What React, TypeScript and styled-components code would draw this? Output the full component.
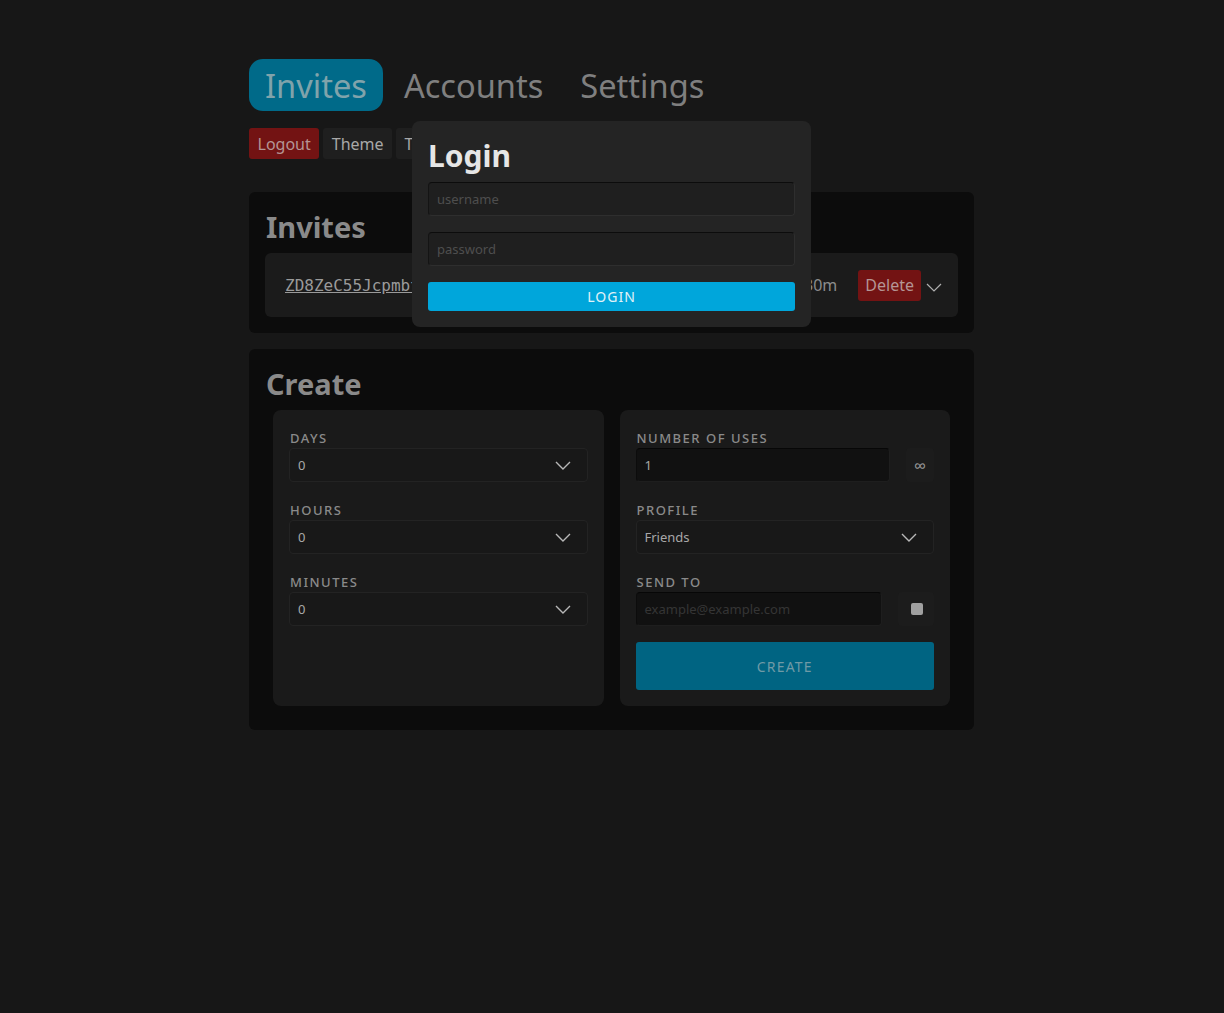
import React from "react";
import styled, { createGlobalStyle } from "styled-components";

const Global = createGlobalStyle`
  html, body { margin: 0; padding: 0; background: #171717; }
  body { font-family: "Noto Sans", "Open Sans", sans-serif; color: #8a8a8a; }
  * { box-sizing: border-box; }
`;

const Page = styled.div`
  width: 725px;
  margin-left: calc(50% - 363px);
  padding-top: 59px;
  display: flex;
  flex-direction: column;
`;

const TabBar = styled.div`
  display: flex;
  gap: 5px;
`;

const Tab = styled.div<{ $active?: boolean }>`
  height: 52px;
  padding: 0 16px;
  display: flex;
  align-items: center;
  font-size: 32.6px;
  border-radius: 14px;
  background: ${(p) => (p.$active ? "#006a89" : "transparent")};
  color: ${(p) => (p.$active ? "#80a3ab" : "#7f7f7f")};
`;

const ButtonRow = styled.div`
  display: flex;
  gap: 4px;
  margin-top: 17px;
`;

const SmallButton = styled.div<{ $danger?: boolean }>`
  height: 31px;
  padding: 0 8.5px;
  display: flex;
  align-items: center;
  font-size: 16px;
  border-radius: 3px;
  background: ${(p) => (p.$danger ? "#731313" : "#1f1f1f")};
  color: ${(p) => (p.$danger ? "#b59595" : "#a8a8a8")};
`;

const Card = styled.section<{ $gap: number }>`
  background: #0c0c0c;
  border-radius: 6px;
  padding: 0 16px 16px;
  margin-top: ${(p) => p.$gap}px;
`;

const CardTitle = styled.h2`
  margin: 0;
  height: 61px;
  display: flex;
  align-items: center;
  padding-top: 8px;
  padding-left: 1px;
  font-size: 29px;
  font-weight: 700;
  color: #8a8a8a;
`;

const InviteRow = styled.div`
  height: 64px;
  background: #1b1b1b;
  border-radius: 6px;
  display: flex;
  align-items: center;
  padding: 0 16px 0 20px;
`;

const Code = styled.span`
  font-family: "DejaVu Sans Mono", "Liberation Mono", monospace;
  font-size: 16px;
  text-decoration: underline;
  color: #9a9a9a;
  flex: 1;
`;

const Expiry = styled.span`
  font-size: 16px;
  color: #8c8c8c;
  margin-right: 21px;
`;

const DeleteButton = styled.div`
  height: 31px;
  padding: 0 7px;
  display: flex;
  align-items: center;
  border-radius: 3px;
  background: #731313;
  color: #b59595;
  font-size: 16px;
`;

const RowChevron = styled.svg`
  margin-left: 5px;
  margin-top: 4px;
`;

const CreateGrid = styled.div`
  display: grid;
  grid-template-columns: 1fr 1fr;
  gap: 16px;
  padding: 0 8px 8px;
`;

const SubCard = styled.div`
  background: #1a1a1a;
  border-radius: 8px;
  padding: 19px 16px 16px;
  height: 296px;
  display: flex;
  flex-direction: column;
  gap: 19px;
`;

const Field = styled.div`
  display: flex;
  flex-direction: column;
  gap: 1px;
`;

const Label = styled.label`
  font-size: 13px;
  line-height: 18px;
  font-weight: 500;
  letter-spacing: 1.5px;
  text-transform: uppercase;
  color: #8a8a8a;
  padding-left: 1px;
`;

const Select = styled.div`
  height: 34px;
  border: 1px solid #232323;
  border-radius: 4px;
  background: #181818;
  display: flex;
  align-items: center;
  justify-content: space-between;
  padding: 0 16px 0 8px;
  font-size: 13px;
  color: #a8a8a8;
`;

const InputRow = styled.div`
  display: flex;
  gap: 16px;
`;

const TextInput = styled.div<{ $placeholder?: boolean }>`
  flex: 1;
  height: 34px;
  border: 1px solid #1e1e1e;
  border-top-color: #070707;
  border-left-color: #0c0c0c;
  border-radius: 4px;
  background: #111111;
  display: flex;
  align-items: center;
  padding: 0 8px;
  font-size: 13px;
  color: ${(p) => (p.$placeholder ? "#353535" : "#a8a8a8")};
`;

const SideBox = styled.div<{ $w: number }>`
  width: ${(p) => p.$w}px;
  height: 34px;
  border-radius: 4px;
  background: #1c1c1c;
  display: flex;
  align-items: center;
  justify-content: center;
  font-size: 17px;
  color: #9a9a9a;
`;

const Check = styled.div`
  width: 12px;
  height: 12px;
  border-radius: 2px;
  background: #a0a0a0;
  margin-left: 1px;
`;

const CreateButton = styled.div`
  height: 48px;
  margin-top: -3px;
  border-radius: 3px;
  background: #006482;
  color: #6f9aa6;
  display: flex;
  align-items: center;
  justify-content: center;
  font-size: 14px;
  letter-spacing: 1.2px;
`;

const Modal = styled.div`
  position: absolute;
  top: 121px;
  left: calc(50% - 200px);
  width: 399px;
  background: #242424;
  border-radius: 8px;
  padding: 16px;
  display: flex;
  flex-direction: column;
  gap: 16px;
`;

const ModalTitle = styled.h1`
  margin: 0;
  height: 29px;
  font-size: 30px;
  line-height: 37px;
  font-weight: 700;
  color: #e6e6e6;
`;

const ModalInput = styled.div`
  height: 34px;
  border-radius: 4px;
  border: 1px solid #2e2e2e;
  border-top-color: #0c0c0c;
  border-left-color: #141414;
  background: #1f1f1f;
  display: flex;
  align-items: center;
  padding: 0 8px;
  font-size: 13px;
  color: #4e4e4e;
`;

const LoginButton = styled.div`
  height: 29px;
  border-radius: 3px;
  background: #00a6db;
  color: #e0f2f8;
  display: flex;
  align-items: center;
  justify-content: center;
  font-size: 14px;
  letter-spacing: 1px;
`;

const Chevron = ({ color = "#b8b8b8" }: { color?: string }) => (
  <svg width="16" height="9" viewBox="0 0 16 9" fill="none">
    <polyline points="1,1 8,8 15,1" stroke={color} strokeWidth="1.4" />
  </svg>
);

export default function App() {
  return (
    <>
      <Global />
      <Page>
        <TabBar>
          <Tab $active>Invites</Tab>
          <Tab>Accounts</Tab>
          <Tab>Settings</Tab>
        </TabBar>
        <ButtonRow>
          <SmallButton $danger>Logout</SmallButton>
          <SmallButton>Theme</SmallButton>
          <SmallButton>Toggle</SmallButton>
        </ButtonRow>
        <Card $gap={33}>
          <CardTitle>Invites</CardTitle>
          <InviteRow>
            <Code>ZD8ZeC55JcpmbtaXc9QvA3</Code>
            <Expiry>0d 0h 30m</Expiry>
            <DeleteButton>Delete</DeleteButton>
            <RowChevron width="16" height="9" viewBox="0 0 16 9" fill="none">
              <polyline points="1,1 8,8 15,1" stroke="#b0b0b0" strokeWidth="1.2" />
            </RowChevron>
          </InviteRow>
        </Card>
        <Card $gap={16}>
          <CardTitle>Create</CardTitle>
          <CreateGrid>
            <SubCard>
              <Field>
                <Label>Days</Label>
                <Select>
                  0<Chevron />
                </Select>
              </Field>
              <Field>
                <Label>Hours</Label>
                <Select>
                  0<Chevron />
                </Select>
              </Field>
              <Field>
                <Label>Minutes</Label>
                <Select>
                  0<Chevron />
                </Select>
              </Field>
            </SubCard>
            <SubCard>
              <Field>
                <Label>Number of uses</Label>
                <InputRow>
                  <TextInput>1</TextInput>
                  <SideBox $w={28}>∞</SideBox>
                </InputRow>
              </Field>
              <Field>
                <Label>Profile</Label>
                <Select>
                  Friends
                  <Chevron />
                </Select>
              </Field>
              <Field>
                <Label>Send to</Label>
                <InputRow>
                  <TextInput $placeholder>example@example.com</TextInput>
                  <SideBox $w={36}>
                    <Check />
                  </SideBox>
                </InputRow>
              </Field>
              <CreateButton>CREATE</CreateButton>
            </SubCard>
          </CreateGrid>
        </Card>
      </Page>
      <Modal>
        <ModalTitle>Login</ModalTitle>
        <ModalInput>username</ModalInput>
        <ModalInput>password</ModalInput>
        <LoginButton>LOGIN</LoginButton>
      </Modal>
    </>
  );
}
